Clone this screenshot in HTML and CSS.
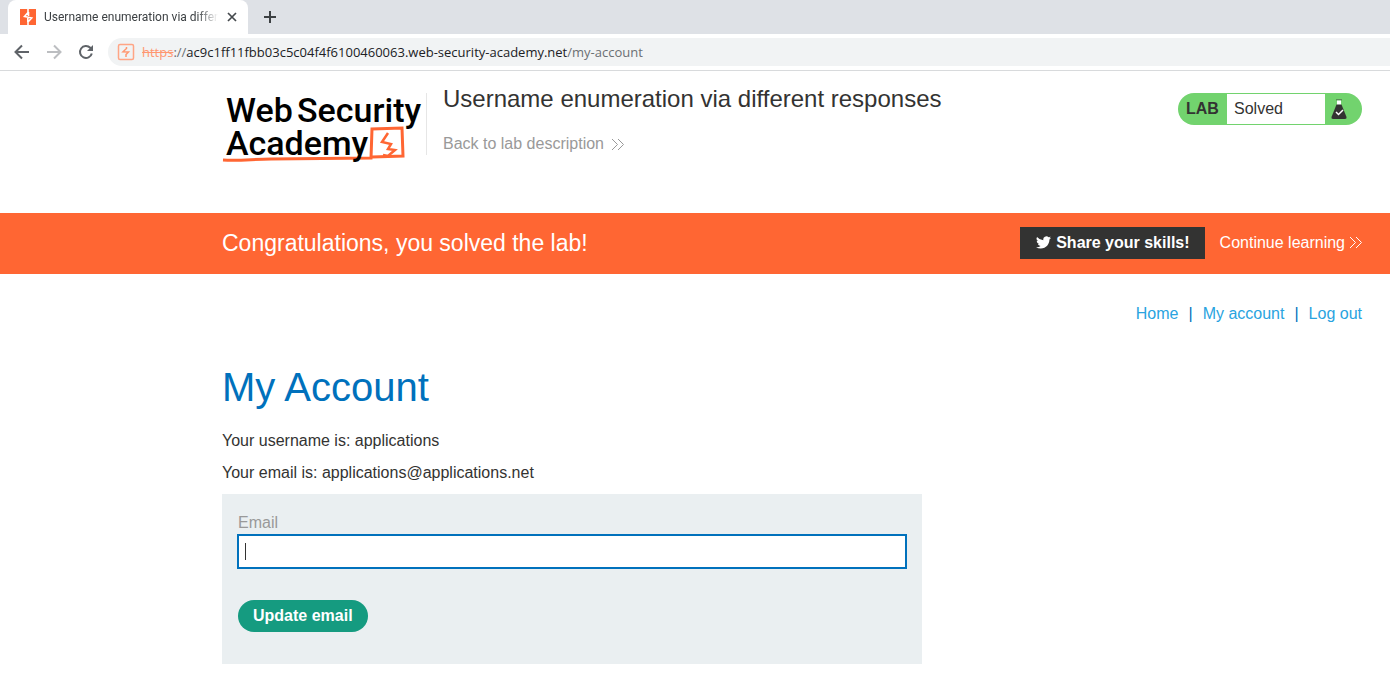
FILE: index.html
```html
<!DOCTYPE html>
<html lang="en">
<head>
<meta charset="utf-8">
<title>Username enumeration via different responses</title>
<link rel="stylesheet" href="styles.css">
</head>
<body>
<div class="browser">
  <div class="tabs">
    <div class="tab">
      <svg class="favicon" width="16" height="16" viewBox="0 0 16 16"><path fill="#ff6633" d="M0 0h16v16H0z"/><path fill="none" stroke="#fff" stroke-width="1.600" d="M8 0v3.500L4.500 7.500 8.500 8.200M8 16v-3l3.700-4L8 8.200M8.500 3v4M7.800 9v4"/></svg>
      <span class="tab-title">Username enumeration via different responses</span>
      <button class="bare tab-close" aria-label="Close tab"><svg width="10" height="10" viewBox="0 0 10 10"><path d="m1 1 8 8M9 1 1 9" stroke="#45494d" stroke-width="1.700"/></svg></button>
    </div>
    <button class="bare new-tab" aria-label="New tab"><svg width="14" height="14" viewBox="0 0 14 14"><path d="M7 1v12M1 7h12" stroke="#3c4043" stroke-width="2"/></svg></button>
  </div>
  <div class="toolbar">
    <button class="bare" aria-label="Back"><svg width="16" height="16" viewBox="0 0 16 16"><path d="M15 8H2M8 1.500 1.500 8 8 14.500" fill="none" stroke="#5f6368" stroke-width="2"/></svg></button>
    <button class="bare" aria-label="Forward"><svg width="16" height="16" viewBox="0 0 16 16"><path d="M1 8h13M8 1.500 14.500 8 8 14.500" fill="none" stroke="#bcbec1" stroke-width="2"/></svg></button>
    <button class="bare" aria-label="Reload"><svg width="16" height="16" viewBox="0 0 16 16"><path d="M13.800 9.500A6 6 0 1 1 12.300 3.800L14 5.500" fill="none" stroke="#5f6368" stroke-width="2"/><path d="M15 1v6H9z" fill="#5f6368"/></svg></button>
    <div class="address">
      <svg width="18" height="18" viewBox="0 0 18 18"><rect x="1.500" y="1.500" width="15" height="15" rx="1.500" fill="none" stroke="#ffa585" stroke-width="1.500"/><path d="M9.500 4v1.500L6 8.800l5.500.2L9 11.500V14" fill="none" stroke="#ff9770" stroke-width="1.500"/></svg>
      <span class="url"><s>https</s><i>://</i>ac9c1ff11fbb03c5c04f4f6100460063.web-security-academy.net<i>/my-account</i></span>
    </div>
  </div>
</div>

<header class="lab-header frame">
  <a class="logo" href="#" aria-label="Web Security Academy">
    <svg width="204" height="78" viewBox="0 0 204 78">
      <path d="M1 74c18 1 30-1 48-1l100-1 1-29 30-1 1 28-31 1" fill="none" stroke="#ff6633" stroke-width="3"/>
      <path d="m166 47-6 9 9 2-3 5 7 1-7 6-5-1" fill="none" stroke="#ff6633" stroke-width="2.500"/>
      <text class="logo-text" x="4" y="36">Web</text>
      <text class="logo-text" x="75" y="36">Security</text>
      <text class="logo-text" x="4" y="69">Academy</text>
    </svg>
  </a>
  <div class="lab-title">
    <h2>Username enumeration via different responses</h2>
    <a href="#">Back to lab description <svg width="13" height="13" viewBox="0 0 13 13"><path d="m1 1 5.500 5.500L1 12M7 1l5.500 5.500L7 12" fill="none" stroke="currentColor"/></svg></a>
  </div>
  <div class="lab-status">
    <strong>LAB</strong><span>Solved</span>
    <svg width="16" height="20" viewBox="0 0 16 20"><path d="M5 0h6v1.500H5z" fill="#5b8c57"/><path d="M6 1.500h4V6H6z" fill="#fff"/><path d="M5.500 5.500h5L15.500 18q.5 2-1.500 2H2q-2 0-1.500-2z" fill="#333332"/><path d="m5 13 2.500 2.500L12 11" fill="none" stroke="#fff" stroke-width="1.500"/></svg>
  </div>
</header>

<section class="banner frame">
  <p>Congratulations, you solved the lab!</p>
  <button class="share"><svg width="15" height="13" viewBox="0 0 24 20"><path fill="#fff" d="M24 2.400a10 10 0 0 1-2.800.8A5 5 0 0 0 23.300.5a10 10 0 0 1-3.100 1.200 4.900 4.900 0 0 0-8.400 4.500A14 14 0 0 1 1.700 1a4.900 4.900 0 0 0 1.500 6.600A5 5 0 0 1 1 7v.1A4.900 4.900 0 0 0 4.900 12a5 5 0 0 1-2.200.1 4.900 4.900 0 0 0 4.600 3.400A10 10 0 0 1 0 17.500a14 14 0 0 0 7.500 2.200c9.100 0 14-7.500 14-14V5A10 10 0 0 0 24 2.400z"/></svg>Share your skills!</button>
  <a href="#">Continue learning <svg width="13" height="13" viewBox="0 0 13 13"><path d="m1 1 5.500 5.500L1 12M7 1l5.500 5.500L7 12" fill="none" stroke="currentColor"/></svg></a>
</section>

<nav class="nav frame"><a href="#">Home</a><span>|</span><a href="#">My account</a><span>|</span><a href="#">Log out</a></nav>

<main class="account frame">
  <h1>My Account</h1>
  <p>Your username is: applications</p>
  <p>Your email is: applications@applications.net</p>
  <form class="panel">
    <label for="email">Email</label>
    <div class="field"><input id="email" type="email"></div>
    <button class="update" type="button">Update email</button>
  </form>
</main>
</body>
</html>
```
FILE: styles.css
```css
* { box-sizing: border-box; }
body { margin: 0; background: #fff; color: #333332; font: 16px/20px "Liberation Sans", Arial, sans-serif; }
a { text-decoration: none; }
h1, h2, p { margin: 0; font-weight: 400; }
svg { flex: none; }
button { border: 0; font: inherit; }
.bare { display: flex; padding: 0; background: none; }

.browser { font-family: "Open Sans", "Noto Sans", sans-serif; border-bottom: 1px solid #d8dadc; }
.tabs { display: flex; align-items: center; height: 34px; padding-left: 8px; background: #dee1e6; }
.tab { display: flex; align-items: center; width: 240px; height: 34px; padding: 0 11px 0 12px; background: #fff; border-radius: 8px 8px 0 0; }
.tab-title { flex: 1; min-width: 0; margin: 0 9px 0 8px; overflow: hidden; white-space: nowrap; font-family: Roboto, sans-serif; font-size: 12px; color: #3c4043; -webkit-mask-image: linear-gradient(to right, #000 88%, transparent); mask-image: linear-gradient(to right, #000 88%, transparent); }
.new-tab { margin-left: 15px; }
.toolbar { display: flex; align-items: center; gap: 16px; height: 36px; padding-left: 14px; }
.address { flex: 1; display: flex; align-items: center; gap: 7px; height: 28px; margin-left: -2px; padding-left: 9px; border-radius: 14px 0 0 14px; background: #f1f3f4; }
.url { font-size: 13px; color: #202124; white-space: nowrap; }
.url s { color: #ff9770; }
.url i { font-style: normal; color: #6b6f73; }

.frame { padding-left: 222px; padding-right: 28px; }
.lab-header { display: flex; align-items: flex-start; height: 142px; padding-top: 16px; }
.logo { margin-top: -1px; }
.logo svg { display: block; }
.logo-text { font: 500 34px Roboto, sans-serif; fill: #000; }
.lab-title { flex: 1; margin-top: 6px; padding-left: 16px; border-left: 1px solid #e6e6e6; height: 62px; }
.lab-title h2 { margin-top: -8px; font-size: 24px; line-height: 28px; }
.lab-title a { display: inline-flex; align-items: center; gap: 7px; margin-top: 21px; color: #999; }
.lab-status { display: flex; align-items: center; width: 184px; height: 32px; margin-top: 6px; padding: 1px 15px 1px 8px; border-radius: 16px; background: #72d36e; }
.lab-status strong { width: 41px; }
.lab-status span { flex: 1; align-self: stretch; margin-right: 6px; padding-left: 7px; line-height: 30px; background: #fff; }

.banner { display: flex; align-items: center; min-height: 61px; padding-bottom: 2px; background: #ff6633; color: #fff; }
.banner p { flex: 1; font-size: 23px; line-height: 28px; }
.banner a { display: flex; align-items: center; gap: 4px; color: #fff; }
.share { display: flex; align-items: center; justify-content: center; gap: 5px; height: 32px; margin-right: 15px; padding: 0 15px 0 16px; background: #333332; color: #fff; font-weight: 700; }

.nav { display: flex; justify-content: flex-end; gap: 10px; padding-top: 30px; color: #0071bc; }
.nav a { color: #29a3e0; }
.account h1 { margin-top: 39px; font-size: 40px; line-height: 48px; color: #0071bc; }
.account p { margin-top: 12px; }
.account h1 + p { margin-top: 20px; }
.panel { max-width: 700px; margin-top: 11px; padding: 19px 15px 32px; background: #eaeff1; }
.panel label { display: block; color: #999; padding-left: 1px; }
.field { position: relative; margin: 1px 0 31px; }
.field::before { content: ""; position: absolute; left: 8px; top: 9px; width: 1px; height: 17px; background: #333332; }
.field input { display: block; width: 100%; height: 35px; padding: 0 6px; border: 2px solid #0071bc; border-radius: 0; outline: 0; background: #fff; font: inherit; }
.update { display: block; height: 32px; margin-left: 1px; padding: 0 15px; border-radius: 16px; background: #159b80; color: #fff; font-weight: 700; }
```
